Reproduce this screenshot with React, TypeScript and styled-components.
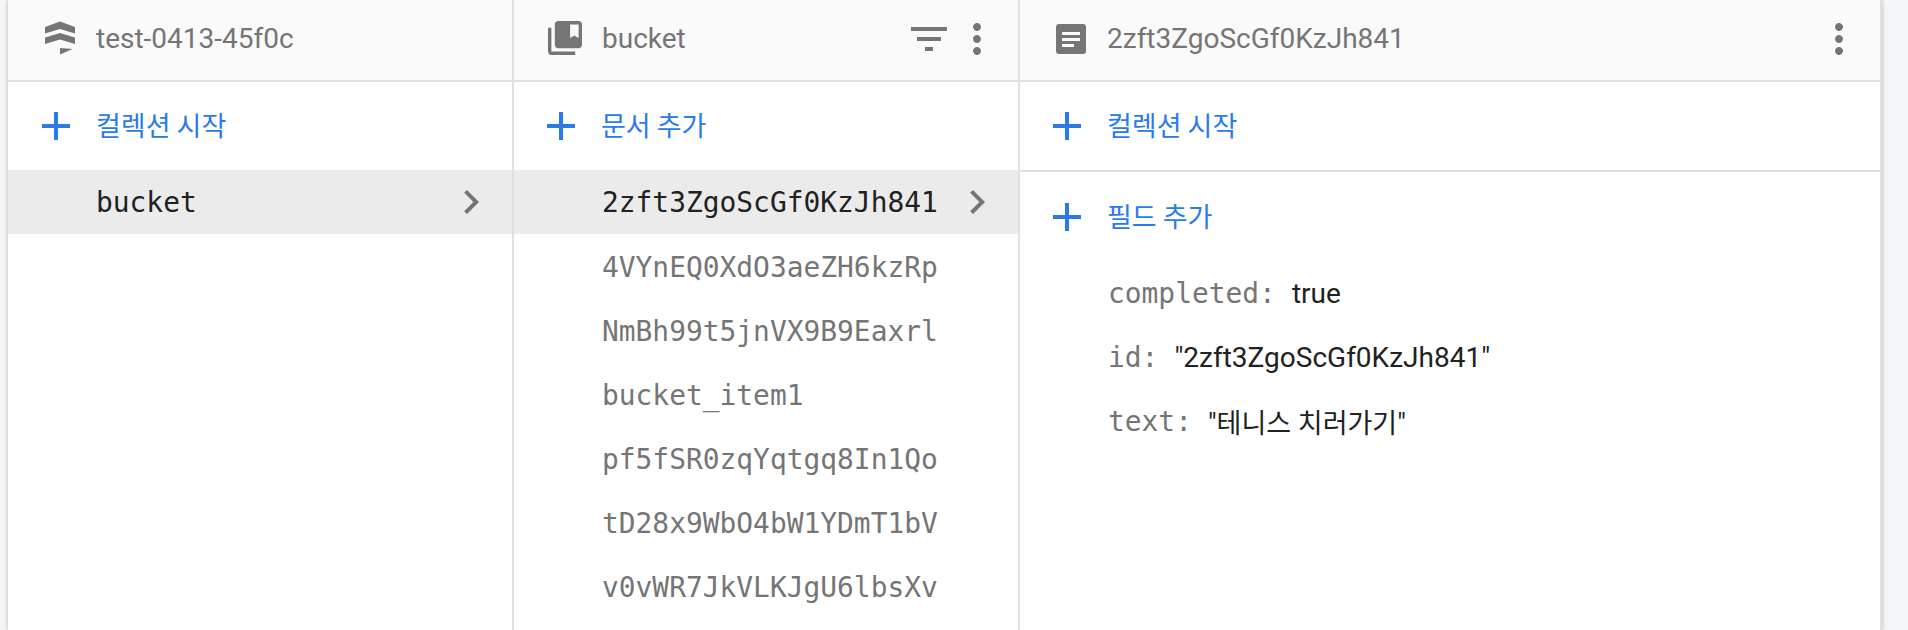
import React from 'react';
import styled, { createGlobalStyle } from 'styled-components';

const GlobalStyle = createGlobalStyle`
  html, body {
    margin: 0;
    padding: 0;
    background: #f5f6f8;
    font-family: Roboto, "Noto Sans CJK KR", sans-serif;
  }
`;

const Page = styled.div`
  display: flex;
  width: 1908px;
  height: 630px;
  padding-left: 8px;
  box-sizing: border-box;
  overflow: hidden;
`;

const Panel = styled.div`
  display: flex;
  width: 1874px;
  height: 630px;
  background: white;
  box-shadow: 0 0 4px rgba(0, 0, 0, 0.28);
`;

const Column = styled.section<{ $width: number }>`
  width: ${(p) => p.$width}px;
  flex: none;
  box-sizing: border-box;
  border-right: 2px solid #e0e0e0;
`;

const Header = styled.header<{ $left: number }>`
  display: flex;
  align-items: center;
  height: 82px;
  box-sizing: border-box;
  padding: 0 17px 3px ${(p) => p.$left}px;
  background: #fafafa;
  border-bottom: 2px solid #e0e0e0;
`;

const HeaderIcon = styled.svg`
  width: 36px;
  height: 36px;
  flex: none;
  fill: #757575;
`;

const HeaderTitle = styled.span`
  margin-left: 18px;
  flex: 1;
  font-size: 28px;
  color: #757575;
`;

const ToolIcon = styled.svg`
  width: 48px;
  height: 48px;
  flex: none;
  fill: #757575;
`;

const AddRow = styled.div<{ $height: number; $left: number; $line?: boolean }>`
  display: flex;
  align-items: center;
  height: ${(p) => p.$height}px;
  box-sizing: border-box;
  padding-left: ${(p) => p.$left}px;
  border-bottom: ${(p) => (p.$line ? '2px solid #e0e0e0' : 'none')};
`;

const AddLabel = styled.span`
  padding-bottom: 4px;
  color: #2a7ae8;
  font-family: "Noto Sans CJK KR", sans-serif;
  font-size: 27px;
`;

const PlusIcon = styled.svg`
  width: 28px;
  height: 28px;
  flex: none;
  margin-right: 26px;
  fill: #2a7ae8;
`;

const ListItem = styled.div<{ $active?: boolean }>`
  display: flex;
  align-items: center;
  justify-content: space-between;
  height: 64px;
  box-sizing: border-box;
  padding-left: 88px;
  padding-right: 17px;
  padding-top: ${(p) => (p.$active ? 0 : 2)}px;
  background: ${(p) => (p.$active ? '#ebebeb' : 'transparent')};
  color: ${(p) => (p.$active ? '#212121' : '#757575')};
  font-family: "DejaVu Sans Mono", monospace;
  font-size: 27.9px;
`;

const Chevron = styled.svg`
  width: 48px;
  height: 48px;
  flex: none;
  margin-left: -16px;
  fill: #757575;
`;

const FieldRow = styled.div`
  display: flex;
  align-items: center;
  height: 64px;
  box-sizing: border-box;
  padding-left: 88px;
  padding-bottom: 2px;
`;

const FieldKey = styled.span`
  margin-right: 16px;
  font-family: "DejaVu Sans Mono", monospace;
  font-size: 27.9px;
  color: #757575;
`;

const FieldValue = styled.span<{ $size: number }>`
  font-family: Roboto, "Noto Sans CJK KR", sans-serif;
  font-size: ${(p) => p.$size}px;
  color: #212121;
`;

const Plus = () => (
  <PlusIcon viewBox="0 0 28 28">
    <path d="M12 0h4v12h12v4H16v12h-4V16H0v-4h12z" />
  </PlusIcon>
);

const ArrowRight = () => (
  <Chevron viewBox="0 0 24 24">
    <path d="M10 6L8.59 7.41 13.17 12l-4.58 4.59L10 18l6-6z" />
  </Chevron>
);

const FilterIcon = () => (
  <ToolIcon viewBox="0 0 24 24">
    <path d="M10 18h4v-2h-4v2zM3 6v2h18V6H3zm3 7h12v-2H6v2z" />
  </ToolIcon>
);

const MoreIcon = () => (
  <ToolIcon viewBox="0 0 24 24">
    <path d="M12 8c1.1 0 2-.9 2-2s-.9-2-2-2-2 .9-2 2 .9 2 2 2zm0 2c-1.1 0-2 .9-2 2s.9 2 2 2 2-.9 2-2-.9-2-2-2zm0 6c-1.1 0-2 .9-2 2s.9 2 2 2 2-.9 2-2-.9-2-2-2z" />
  </ToolIcon>
);

const documents = [
  '4VYnEQ0XdO3aeZH6kzRp',
  'NmBh99t5jnVX9B9Eaxrl',
  'bucket_item1',
  'pf5fSR0zqYqtgq8In1Qo',
  'tD28x9WbO4bW1YDmT1bV',
  'v0vWR7JkVLKJgU6lbsXv',
];

const fields = [
  { key: 'completed:', value: 'true', size: 28 },
  { key: 'id:', value: '"2zft3ZgoScGf0KzJh841"', size: 28 },
  { key: 'text:', value: '"테니스 치러가기"', size: 27 },
];

const App: React.FC = () => (
  <Page>
    <GlobalStyle />
    <Panel>
      <Column $width={506}>
        <Header $left={34}>
          <HeaderIcon viewBox="0 0 36 36">
            <path d="M3 6L18 .5 33 6v6.5L18 8 3 12.5z" />
            <path d="M3 16.5L18 12l15 4.5V23l-15-4.5L3 23z" />
            <path d="M18 27l12.7 1L18 33.5z" />
          </HeaderIcon>
          <HeaderTitle>test-0413-45f0c</HeaderTitle>
        </Header>
        <AddRow $height={88} $left={34}>
          <Plus />
          <AddLabel>컬렉션 시작</AddLabel>
        </AddRow>
        <ListItem $active>
          bucket
          <ArrowRight />
        </ListItem>
      </Column>

      <Column $width={506}>
        <Header $left={34}>
          <HeaderIcon viewBox="2 2 21.18 21.18">
            <path d="M4 6H2v14c0 1.1.9 2 2 2h14v-2H4V6zm16-4H8c-1.1 0-2 .9-2 2v12c0 1.1.9 2 2 2h12c1.1 0 2-.9 2-2V4c0-1.1-.9-2-2-2zm0 10l-2.5-1.5L15 12V4h5v8z" />
          </HeaderIcon>
          <HeaderTitle>bucket</HeaderTitle>
          <FilterIcon />
          <MoreIcon />
        </Header>
        <AddRow $height={88} $left={33}>
          <Plus />
          <AddLabel>문서 추가</AddLabel>
        </AddRow>
        <ListItem $active>
          2zft3ZgoScGf0KzJh841
          <ArrowRight />
        </ListItem>
        {documents.map((id) => (
          <ListItem key={id}>{id}</ListItem>
        ))}
      </Column>

      <Column $width={862}>
        <Header $left={33}>
          <HeaderIcon viewBox="0 0 36 36">
            <path d="M6 3h24a3 3 0 0 1 3 3v24a3 3 0 0 1-3 3H6a3 3 0 0 1-3-3V6a3 3 0 0 1 3-3zm3 8v3h18v-3zm0 6v3h18v-3zm0 6v3h12v-3z" fillRule="evenodd" />
          </HeaderIcon>
          <HeaderTitle>2zft3ZgoScGf0KzJh841</HeaderTitle>
          <MoreIcon />
        </Header>
        <AddRow $height={90} $left={33} $line>
          <Plus />
          <AddLabel>컬렉션 시작</AddLabel>
        </AddRow>
        <AddRow $height={90} $left={33}>
          <Plus />
          <AddLabel>필드 추가</AddLabel>
        </AddRow>
        {fields.map((f) => (
          <FieldRow key={f.key}>
            <FieldKey>{f.key}</FieldKey>
            <FieldValue $size={f.size}>{f.value}</FieldValue>
          </FieldRow>
        ))}
      </Column>
    </Panel>
  </Page>
);

export default App;
